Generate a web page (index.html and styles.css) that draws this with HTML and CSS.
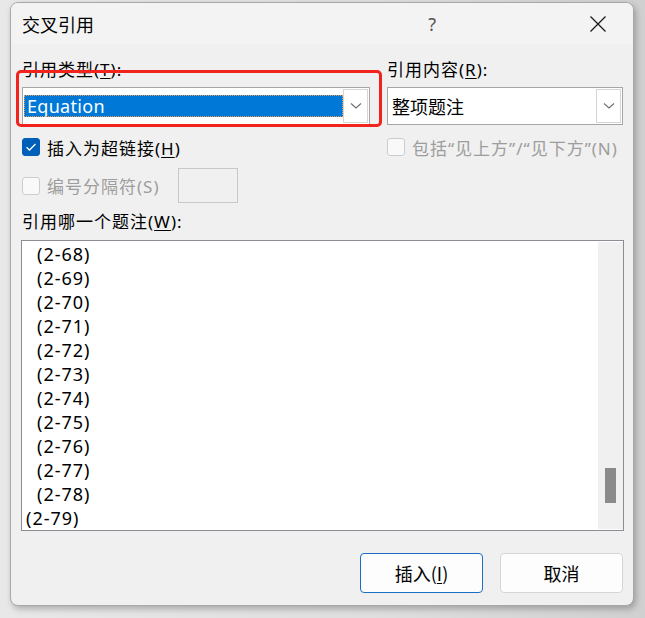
FILE: index.html
```html
<!DOCTYPE html>
<html lang="zh">
<head>
<meta charset="utf-8">
<link rel="stylesheet" href="styles.css">
</head>
<body>
<div class="window">
  <div class="titlebar">
    <span class="title">交叉引用</span>
    <span class="help">?</span>
    <span class="close">
      <svg width="18" height="18" viewBox="0 0 18 18"><path d="M1.5 1.5 L16.5 16.5 M16.5 1.5 L1.5 16.5" stroke="#1a1a1a" stroke-width="1.3" fill="none"/></svg>
    </span>
  </div>
  <div class="content">
    <div class="top-grid">
      <div class="col left">
        <div class="label">引用类型(<u>T</u>):</div>
        <div class="combo">
          <div class="combo-value selected"><span>Equation</span></div>
          <div class="combo-btn"><svg width="12" height="8" viewBox="0 0 12 8"><path d="M1 1.5 L6 6 L11 1.5" stroke="#6e6e6e" stroke-width="1.1" fill="none"/></svg></div>
        </div>
        <div class="highlight"></div>
      </div>
      <div class="col right">
        <div class="label">引用内容(<u>R</u>):</div>
        <div class="combo">
          <div class="combo-value"><span>整项题注</span></div>
          <div class="combo-btn"><svg width="12" height="8" viewBox="0 0 12 8"><path d="M1 1.5 L6 6 L11 1.5" stroke="#6e6e6e" stroke-width="1.1" fill="none"/></svg></div>
        </div>
      </div>
      <label class="check">
        <span class="box checked"><svg width="12" height="10" viewBox="0 0 12 10"><path d="M1.5 5.2 L4.5 8 L10.5 2" stroke="#fff" stroke-width="1.3" fill="none"/></svg></span>
        <span>插入为超链接(<u>H</u>)</span>
      </label>
      <label class="check disabled">
        <span class="box"></span>
        <span>包括“见上方”/“见下方”(N)</span>
      </label>
      <div class="sep-row">
        <label class="check disabled sep-check">
          <span class="box"></span>
          <span>编号分隔符(S)</span>
        </label>
        <div class="sep-input"></div>
      </div>
    </div>
    <div class="label list-label">引用哪一个题注(<u>W</u>):</div>
    <div class="listbox">
      <div class="items">
        <div class="item">(2-68)</div>
        <div class="item">(2-69)</div>
        <div class="item">(2-70)</div>
        <div class="item">(2-71)</div>
        <div class="item">(2-72)</div>
        <div class="item">(2-73)</div>
        <div class="item">(2-74)</div>
        <div class="item">(2-75)</div>
        <div class="item">(2-76)</div>
        <div class="item">(2-77)</div>
        <div class="item">(2-78)</div>
        <div class="item last">(2-79)</div>
      </div>
      <div class="scrollbar"><div class="thumb"></div></div>
    </div>
    <div class="buttons">
      <button class="btn default">插入(<u>I</u>)</button>
      <button class="btn">取消</button>
    </div>
  </div>
</div>
</body>
</html>
```
FILE: styles.css
```css
* { box-sizing: border-box; }
html, body { margin: 0; padding: 0; }
body {
  width: 645px;
  height: 618px;
  background: linear-gradient(to right, #e8e8e8 0%, #dedede 60%, #d0d0d0 100%);
  font-family: "Noto Sans", "Noto Sans CJK SC", sans-serif;
  font-size: 16px;
  color: #000;
  overflow: hidden;
  padding-top: 2px;
  padding-left: 10px;
}
.window {
  width: 624px;
  height: 604px;
  background: #f0f0f0;
  border: 1px solid #a8a8a8;
  border-radius: 8px;
  box-shadow: 2px 3px 6px rgba(0,0,0,0.25);
  overflow: hidden;
  display: flex;
  flex-direction: column;
}
.titlebar {
  height: 41px;
  background: #f3f3f3;
  display: flex;
  align-items: center;
  padding-left: 11px;
  flex-shrink: 0;
}
.title {
  font-family: "Noto Sans CJK SC", sans-serif;
  font-size: 18px;
  flex: 1;
}
.help {
  font-family: "Noto Sans", sans-serif;
  font-size: 18px;
  color: #555;
  margin-right: 153px;
}
.close {
  display: flex;
  margin-right: 26px;
}
.content {
  padding: 14px 10px 0 11px;
  display: flex;
  flex-direction: column;
  flex: 1;
}
.top-grid {
  display: grid;
  grid-template-columns: 348px 236px;
  column-gap: 17px;
}
.col { position: relative; }
.label {
  font-family: "Noto Sans", "Noto Sans CJK SC", sans-serif;
  font-size: 17px;
  letter-spacing: 1px;
  line-height: 24px;
  height: 24px;
  margin-bottom: 5px;
  color: #000;
}
.combo {
  height: 38px;
  background: #fff;
  border: 1px solid #a6a6a6;
  display: flex;
  align-items: stretch;
  padding: 1px;
}
.combo-value {
  flex: 1;
  display: flex;
  align-items: center;
  font-size: 18px;
  padding-left: 4px;
}
.combo-value.selected {
  background: #0078d7;
  color: #fff;
  margin: 6px 0 6px 0;
  outline: 1px dotted #e89b53;
  outline-offset: -1px;
  padding-left: 3px;
  letter-spacing: 0.3px;
}
.combo-btn {
  width: 25px;
  border: 1px solid #d6d6d6;
  background: #fff;
  display: flex;
  align-items: center;
  justify-content: center;
}
.right .combo-value { font-family: "Noto Sans CJK SC", sans-serif; padding-left: 3px; }
.highlight {
  position: absolute;
  left: -6px;
  top: 12px;
  width: 366px;
  height: 57px;
  border: 3px solid #f2231d;
  border-radius: 5px;
  pointer-events: none;
}
.check {
  display: flex;
  align-items: center;
  gap: 7px;
  height: 24px;
  margin-top: 10px;
  font-family: "Noto Sans", "Noto Sans CJK SC", sans-serif;
  font-size: 17px;
  letter-spacing: 1px;
}
.check.disabled { color: #9d9d9d; }
.box {
  width: 18px;
  height: 18px;
  border-radius: 3px;
  border: 1px solid #cdcdcd;
  background: #f9f9f9;
  display: flex;
  align-items: center;
  justify-content: center;
  flex-shrink: 0;
}
.box.checked {
  background: #005fb8;
  border-color: #005fb8;
}
.sep-row {
  display: flex;
  align-items: center;
  margin-top: 9px;
  height: 35px;
}
.sep-row .check { margin-top: 0; }
.sep-check { width: 156px; }
.sep-input {
  width: 60px;
  height: 35px;
  border: 1px solid #c8c8c8;
  background: #f0f0f0;
}
.list-label {
  margin-top: 7px;
  margin-bottom: 6px;
}
.listbox {
  height: 291px;
  width: 603px;
  margin-left: -1px;
  border: 1px solid #8c8c94;
  background: #fff;
  display: flex;
  overflow: hidden;
}
.items {
  flex: 1;
  padding-top: 1px;
}
.item {
  height: 24px;
  line-height: 24px;
  font-size: 18px;
  letter-spacing: 1px;
  padding-left: 15px;
  color: #000;
}
.item.last { padding-left: 4px; }
.scrollbar {
  width: 25px;
  margin: 1px 0 1px 0;
  background: #f0f0f0;
  position: relative;
}
.thumb {
  position: absolute;
  left: 7px;
  top: 226px;
  width: 11px;
  height: 35px;
  background: #8a8a8a;
}
.buttons {
  display: flex;
  justify-content: flex-end;
  gap: 17px;
  margin-top: 22px;
}
.btn {
  width: 123px;
  height: 40px;
  border: 1px solid #d5d5d5;
  border-radius: 4px;
  background: #fdfdfd;
  font-family: "Noto Sans CJK SC", sans-serif;
  font-size: 18px;
  color: #000;
  padding: 0;
}
.btn.default {
  border-color: #1a6fc4;
}
u { text-decoration: underline; text-underline-offset: 2px; }
```
